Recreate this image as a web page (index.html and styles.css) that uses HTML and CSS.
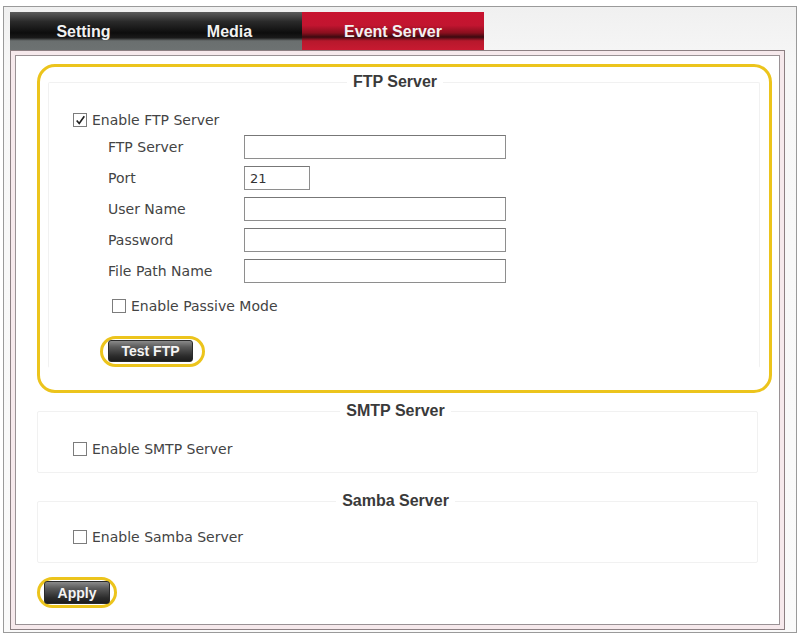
FILE: index.html
```html
<!DOCTYPE html>
<html lang="en">
<head>
  <meta charset="UTF-8">
  <meta name="viewport" content="width=device-width, initial-scale=1.0">
  <title>Event Server</title>
  <link rel="stylesheet" href="styles.css">
</head>
<body>
  <div class="frame">
    <div class="tabs">
      <div class="tab tab-setting">Setting</div>
      <div class="tab tab-media">Media</div>
      <div class="tab tab-active">Event Server</div>
    </div>

    <div class="panel">
      <div class="panel-inner">

        <div class="mark mark-box">
          <fieldset class="group group-ftp">
            <legend>FTP Server</legend>
            <div class="group-body body-ftp">
              <label class="check check-top">
                <span class="box checked">
                  <svg viewBox="0 0 13 13" width="11" height="11"><path d="M2 6.5 L5 10 L11 1.5" fill="none" stroke="#222" stroke-width="2"/></svg>
                </span>
                Enable FTP Server
              </label>

              <div class="fields">
                <span class="field-label">FTP Server</span>
                <input type="text" class="field-input">
                <span class="field-label">Port</span>
                <input type="text" class="field-input short" value="21">
                <span class="field-label">User Name</span>
                <input type="text" class="field-input">
                <span class="field-label">Password</span>
                <input type="password" class="field-input">
                <span class="field-label">File Path Name</span>
                <input type="text" class="field-input">
              </div>

              <label class="check check-passive">
                <span class="box"></span>
                Enable Passive Mode
              </label>

              <div class="mark mark-btn mark-test">
                <button class="btn btn-test">Test FTP</button>
              </div>
            </div>
          </fieldset>
        </div>

        <fieldset class="group group-small group-smtp">
          <legend>SMTP Server</legend>
          <div class="group-body">
            <label class="check">
              <span class="box"></span>
              Enable SMTP Server
            </label>
          </div>
        </fieldset>

        <fieldset class="group group-small group-samba">
          <legend>Samba Server</legend>
          <div class="group-body">
            <label class="check">
              <span class="box"></span>
              Enable Samba Server
            </label>
          </div>
        </fieldset>

        <div class="mark mark-btn mark-apply">
          <button class="btn btn-apply">Apply</button>
        </div>

      </div>
    </div>
  </div>
</body>
</html>
```

FILE: styles.css
```css
html, body {
  margin: 0;
  background: #fff;
}
body {
  font-family: "DejaVu Sans", Verdana, sans-serif;
  font-size: 14px;
  color: #444;
}
.frame {
  box-sizing: border-box;
  width: 794px;
  height: 627px;
  margin: 6px 0 0 3px;
  padding: 5px 11px 1px 6px;
  border: 1px solid #9a9a9a;
  background: linear-gradient(#f0f0f0, #f7f7f7 60px, #fafafa);
}

/* tabs */
.tabs {
  display: flex;
  height: 38px;
}
.tab {
  display: flex;
  align-items: center;
  justify-content: center;
  padding-top: 2px;
  box-sizing: border-box;
  font-family: "Liberation Sans", Arial, sans-serif;
  font-weight: bold;
  font-size: 16px;
  color: #f2f2f2;
  background: linear-gradient(#5c5c5c 0%, #2a2a2a 25%, #0d0d0d 55%, #1a1a1a 68%, #6a6f6f 76%, #6d7272 100%);
}
.tab-setting {
  width: 147px;
}
.tab-media {
  width: 145px;
}
.tab-active {
  width: 182px;
  background: linear-gradient(#c8132f 0%, #c21530 35%, #8a0f1e 55%, #3b0a10 66%, #b7182c 76%, #c81a31 100%);
}

/* panel */
.panel {
  box-sizing: border-box;
  height: 580px;
  border: 1px solid #8c7f82;
  padding: 4px;
  background: #f6e9ec;
}
.panel-inner {
  box-sizing: border-box;
  height: 100%;
  border: 1px solid #9a9295;
  background: #fff;
  padding-top: 8px;
}

/* yellow highlights */
.mark {
  box-sizing: border-box;
  border: 3px solid #ecc41c;
}
.mark-box {
  width: 735px;
  margin-left: 21px;
  padding: 5px 9px 22px 8px;
  border-radius: 18px;
}
.mark-btn {
  display: inline-block;
  border-radius: 16px;
}

/* fieldsets */
.group {
  margin: 0;
  padding: 0;
  border: 1px solid #f1f1f1;
  border-radius: 2px;
}
.group legend {
  margin: 0 auto;
  padding: 0 6px;
  height: 20px;
  line-height: 20px;
  font-family: "Liberation Sans", Arial, sans-serif;
  font-weight: bold;
  font-size: 16px;
  color: #3a3a3a;
}
.group-body {
  margin-right: -18px;
}
.group-ftp {
  border-bottom-color: transparent;
  padding-right: 18px;
}
.body-ftp {
  padding-left: 24px;
}
.group-small {
  width: 721px;
  margin-left: 21px;
  padding-right: 4px;
  box-sizing: border-box;
}
.group-small .group-body {
  margin-right: 0;
  padding-left: 35px;
}
.group-smtp {
  margin-top: 8px;
  padding-bottom: 12px;
}
.group-samba {
  margin-top: 18px;
  padding-bottom: 14px;
}
.group-smtp .check {
  margin-top: 17px;
}
.group-samba .check {
  margin-top: 15px;
}

/* checkboxes */
.check {
  display: flex;
  align-items: center;
  gap: 5px;
  height: 22px;
}
.box {
  box-sizing: border-box;
  width: 14px;
  height: 14px;
  border: 1px solid #7c7c7c;
  background: #fff;
  display: flex;
  align-items: center;
  justify-content: center;
}
.check-top {
  margin-top: 17px;
}
.check-passive {
  margin: 12px 0 0 39px;
}

/* form rows */
.fields {
  display: grid;
  grid-template-columns: 136px auto;
  grid-auto-rows: 24px;
  row-gap: 7px;
  align-items: center;
  margin: 4px 0 0 35px;
}
.field-input {
  box-sizing: border-box;
  width: 262px;
  height: 24px;
  margin: 0;
  padding: 0 5px;
  border: 1px solid #8e8e8e;
  border-top-color: #777;
  font-family: "DejaVu Sans", Verdana, sans-serif;
  font-size: 13px;
  color: #333;
  outline: none;
}
.field-input.short {
  width: 66px;
}

/* buttons */
.btn {
  display: block;
  border: 1px solid #2a2a2a;
  border-radius: 3px;
  padding: 0;
  font-family: "Liberation Sans", Arial, sans-serif;
  font-weight: bold;
  font-size: 14px;
  color: #f4f4f4;
  background: linear-gradient(#8a8a8a 0%, #5a5a5a 30%, #2c2c2c 75%, #1c1c1c 100%);
}
.mark-test {
  margin: 19px 0 0 27px;
  padding: 1px 9px 2px 5px;
}
.btn-test {
  width: 85px;
  height: 22px;
}
.mark-apply {
  margin: 14px 0 0 21px;
  padding: 1px 4px;
}
.btn-apply {
  width: 66px;
  height: 23px;
}
```
